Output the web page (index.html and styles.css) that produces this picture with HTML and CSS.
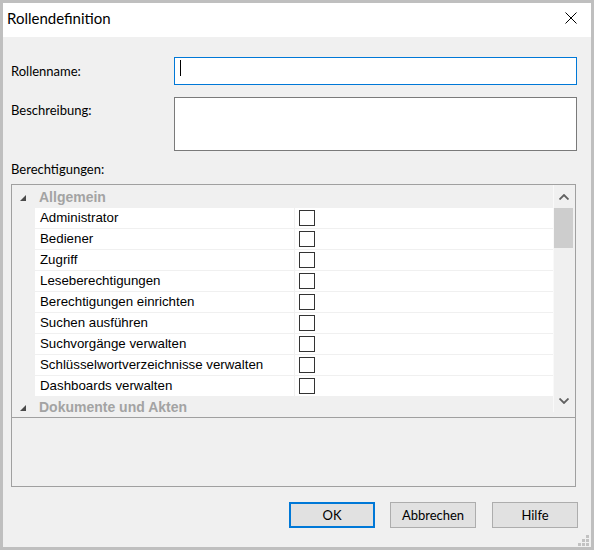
FILE: index.html
```html
<!DOCTYPE html>
<html lang="de">
<head>
<meta charset="utf-8">
<title>Rollendefinition</title>
<link rel="stylesheet" href="styles.css">
</head>
<body>
<div class="window">
  <div class="titlebar">
    <span class="title">Rollendefinition</span>
    <svg class="close" width="12" height="12" viewBox="0 0 12 12"><path d="M0.5 0.5 L11.5 11.5 M11.5 0.5 L0.5 11.5" stroke="#000" stroke-width="1" fill="none"/></svg>
  </div>
  <div class="content">
    <div class="form-row row-name">
      <label class="label">Rollenname:</label>
      <div class="input focused"><span class="caret"></span></div>
    </div>
    <div class="form-row row-desc">
      <label class="label label-top">Beschreibung:</label>
      <div class="input textarea"></div>
    </div>
    <div class="label section-label">Berechtigungen:</div>
    <div class="propbox">
      <div class="grid-area">
        <div class="list">
          <div class="cat">
            <span class="gutter"><svg width="6" height="6" viewBox="0 0 6 6"><polygon points="6,0 6,6 0,6" fill="#4a4a4a"/></svg></span>
            <span class="cat-name">Allgemein</span>
          </div>
          <div class="prop"><span class="gutter"></span><span class="name">Administrator</span><span class="value"><span class="check"></span></span></div>
          <div class="prop"><span class="gutter"></span><span class="name">Bediener</span><span class="value"><span class="check"></span></span></div>
          <div class="prop"><span class="gutter"></span><span class="name">Zugriff</span><span class="value"><span class="check"></span></span></div>
          <div class="prop"><span class="gutter"></span><span class="name">Leseberechtigungen</span><span class="value"><span class="check"></span></span></div>
          <div class="prop"><span class="gutter"></span><span class="name">Berechtigungen einrichten</span><span class="value"><span class="check"></span></span></div>
          <div class="prop"><span class="gutter"></span><span class="name">Suchen ausführen</span><span class="value"><span class="check"></span></span></div>
          <div class="prop"><span class="gutter"></span><span class="name">Suchvorgänge verwalten</span><span class="value"><span class="check"></span></span></div>
          <div class="prop"><span class="gutter"></span><span class="name">Schlüsselwortverzeichnisse verwalten</span><span class="value"><span class="check"></span></span></div>
          <div class="prop"><span class="gutter"></span><span class="name">Dashboards verwalten</span><span class="value"><span class="check"></span></span></div>
          <div class="cat cat-second">
            <span class="gutter"><svg width="6" height="6" viewBox="0 0 6 6"><polygon points="6,0 6,6 0,6" fill="#4a4a4a"/></svg></span>
            <span class="cat-name">Dokumente und Akten</span>
          </div>
        </div>
        <div class="scrollbar">
          <div class="sb-btn sb-up"><svg width="10" height="6" viewBox="0 0 10 6"><polyline points="0.5,5.5 5,1 9.5,5.5" fill="none" stroke="#606060" stroke-width="1.8"/></svg></div>
          <div class="sb-track"><div class="sb-thumb"></div></div>
          <div class="sb-btn sb-down"><svg width="10" height="6" viewBox="0 0 10 6"><polyline points="0.5,0.5 5,5 9.5,0.5" fill="none" stroke="#606060" stroke-width="1.8"/></svg></div>
        </div>
      </div>
      <div class="help"></div>
    </div>
    <div class="buttons">
      <button class="btn btn-default">OK</button>
      <button class="btn btn-cancel">Abbrechen</button>
      <button class="btn btn-help">Hilfe</button>
    </div>
  </div>
  <svg class="grip" width="12" height="12" viewBox="0 0 12 12">
    <rect x="8" y="0" width="3" height="3" fill="#c2c2c2"/>
    <rect x="4" y="4" width="3" height="3" fill="#c2c2c2"/>
    <rect x="8" y="4" width="3" height="3" fill="#c2c2c2"/>
    <rect x="0" y="8" width="3" height="3" fill="#c2c2c2"/>
    <rect x="4" y="8" width="3" height="3" fill="#c2c2c2"/>
    <rect x="8" y="8" width="3" height="3" fill="#c2c2c2"/>
  </svg>
</div>
</body>
</html>
```

FILE: styles.css
```css
* { box-sizing: border-box; }
html, body { margin: 0; padding: 0; }
body { background: #f0f0f0; }

.window {
  position: relative;
  width: 594px;
  height: 550px;
  border: 3px solid #bfbfbf;
  background: #f0f0f0;
  display: flex;
  flex-direction: column;
  font-family: Lato, "Noto Sans", sans-serif;
  font-size: 13px;
  color: #000;
}

.titlebar {
  height: 34px;
  background: #fff;
  display: flex;
  align-items: center;
  justify-content: space-between;
  padding: 0 14px 4px 4px;
}
.title { font-size: 15px; line-height: 18px; }
.close { display: block; }

.content {
  flex: 1;
  display: flex;
  flex-direction: column;
  padding: 20px 14px 0 8px;
}

.form-row { display: flex; }
.row-name { height: 28px; align-items: center; }
.row-desc { margin-top: 12px; height: 54px; align-items: flex-start; }

.label { width: 163px; line-height: 16px; flex: none; }
.label-top { padding-top: 5px; }
.section-label { margin-top: 10px; }

.input {
  flex: 1;
  height: 28px;
  background: #fff;
  border: 1px solid #7a7a7a;
  position: relative;
}
.input.focused { border-color: #0078d7; }
.input.textarea { height: 54px; }
.caret {
  position: absolute;
  left: 5px;
  top: 2px;
  width: 1px;
  height: 16px;
  background: #000;
}

.propbox {
  margin: 7px 1px 0 0;
  height: 303px;
  border: 1px solid #a0a0a0;
  display: flex;
  flex-direction: column;
  font-family: "Liberation Sans", Arial, sans-serif;
  font-size: 13.3px;
}
.grid-area {
  height: 233px;
  display: flex;
  border-bottom: 1px solid #a0a0a0;
  background: #f0f0f0;
}
.list {
  width: 541px;
  overflow: hidden;
  padding-top: 2px;
  background: #f0f0f0;
}
.cat {
  display: flex;
  height: 21px;
  border-bottom: 1px solid #f0f0f0;
  line-height: 20px;
}
.gutter {
  width: 22px;
  flex: none;
  display: flex;
  align-items: center;
  padding-left: 8px;
}
.cat .gutter svg { display: block; margin-top: 2px; }
.cat-name {
  padding-left: 5px;
  font-weight: bold;
  font-size: 14px;
  color: #a3a3a3;
  white-space: nowrap;
}
.prop {
  display: grid;
  grid-template-columns: 22px 259px 259px;
  column-gap: 1px;
  height: 21px;
  background: #f0f0f0;
}
.prop .name, .prop .value {
  background: #fff;
  height: 20px;
  line-height: 20px;
}
.prop .name { padding-left: 5px; white-space: nowrap; color: #000; }
.prop .value { padding: 2px 0 0 4px; }
.check {
  display: block;
  width: 16px;
  height: 16px;
  border: 1px solid #333;
  background: #fff;
}

.scrollbar {
  width: 22px;
  height: 227px;
  display: flex;
  flex-direction: column;
  border-left: 1px solid #f9f9f9;
}
.sb-btn {
  display: flex;
  align-items: center;
  padding-left: 5px;
}
.sb-btn svg { display: block; }
.sb-up { height: 23px; }
.sb-track { flex: 1; }
.sb-thumb { width: 19px; height: 40px; background: #cdcdcd; }
.sb-down { height: 22px; }

.help { flex: 1; background: #f0f0f0; }

.buttons {
  display: flex;
  justify-content: flex-end;
  margin: 15px 0 0 0;
}
.btn {
  width: 86px;
  height: 26px;
  background: #e1e1e1;
  border: 1px solid #adadad;
  font-family: Lato, "Noto Sans", sans-serif;
  font-size: 13px;
  color: #000;
  padding: 0;
  margin: 0;
}
.btn-default { border: 2px solid #0078d7; }
.btn-cancel { margin-left: 15px; }
.btn-help { margin-left: 16px; margin-right: -1px; }

.grip {
  position: absolute;
  right: 1px;
  bottom: 0;
}
```
